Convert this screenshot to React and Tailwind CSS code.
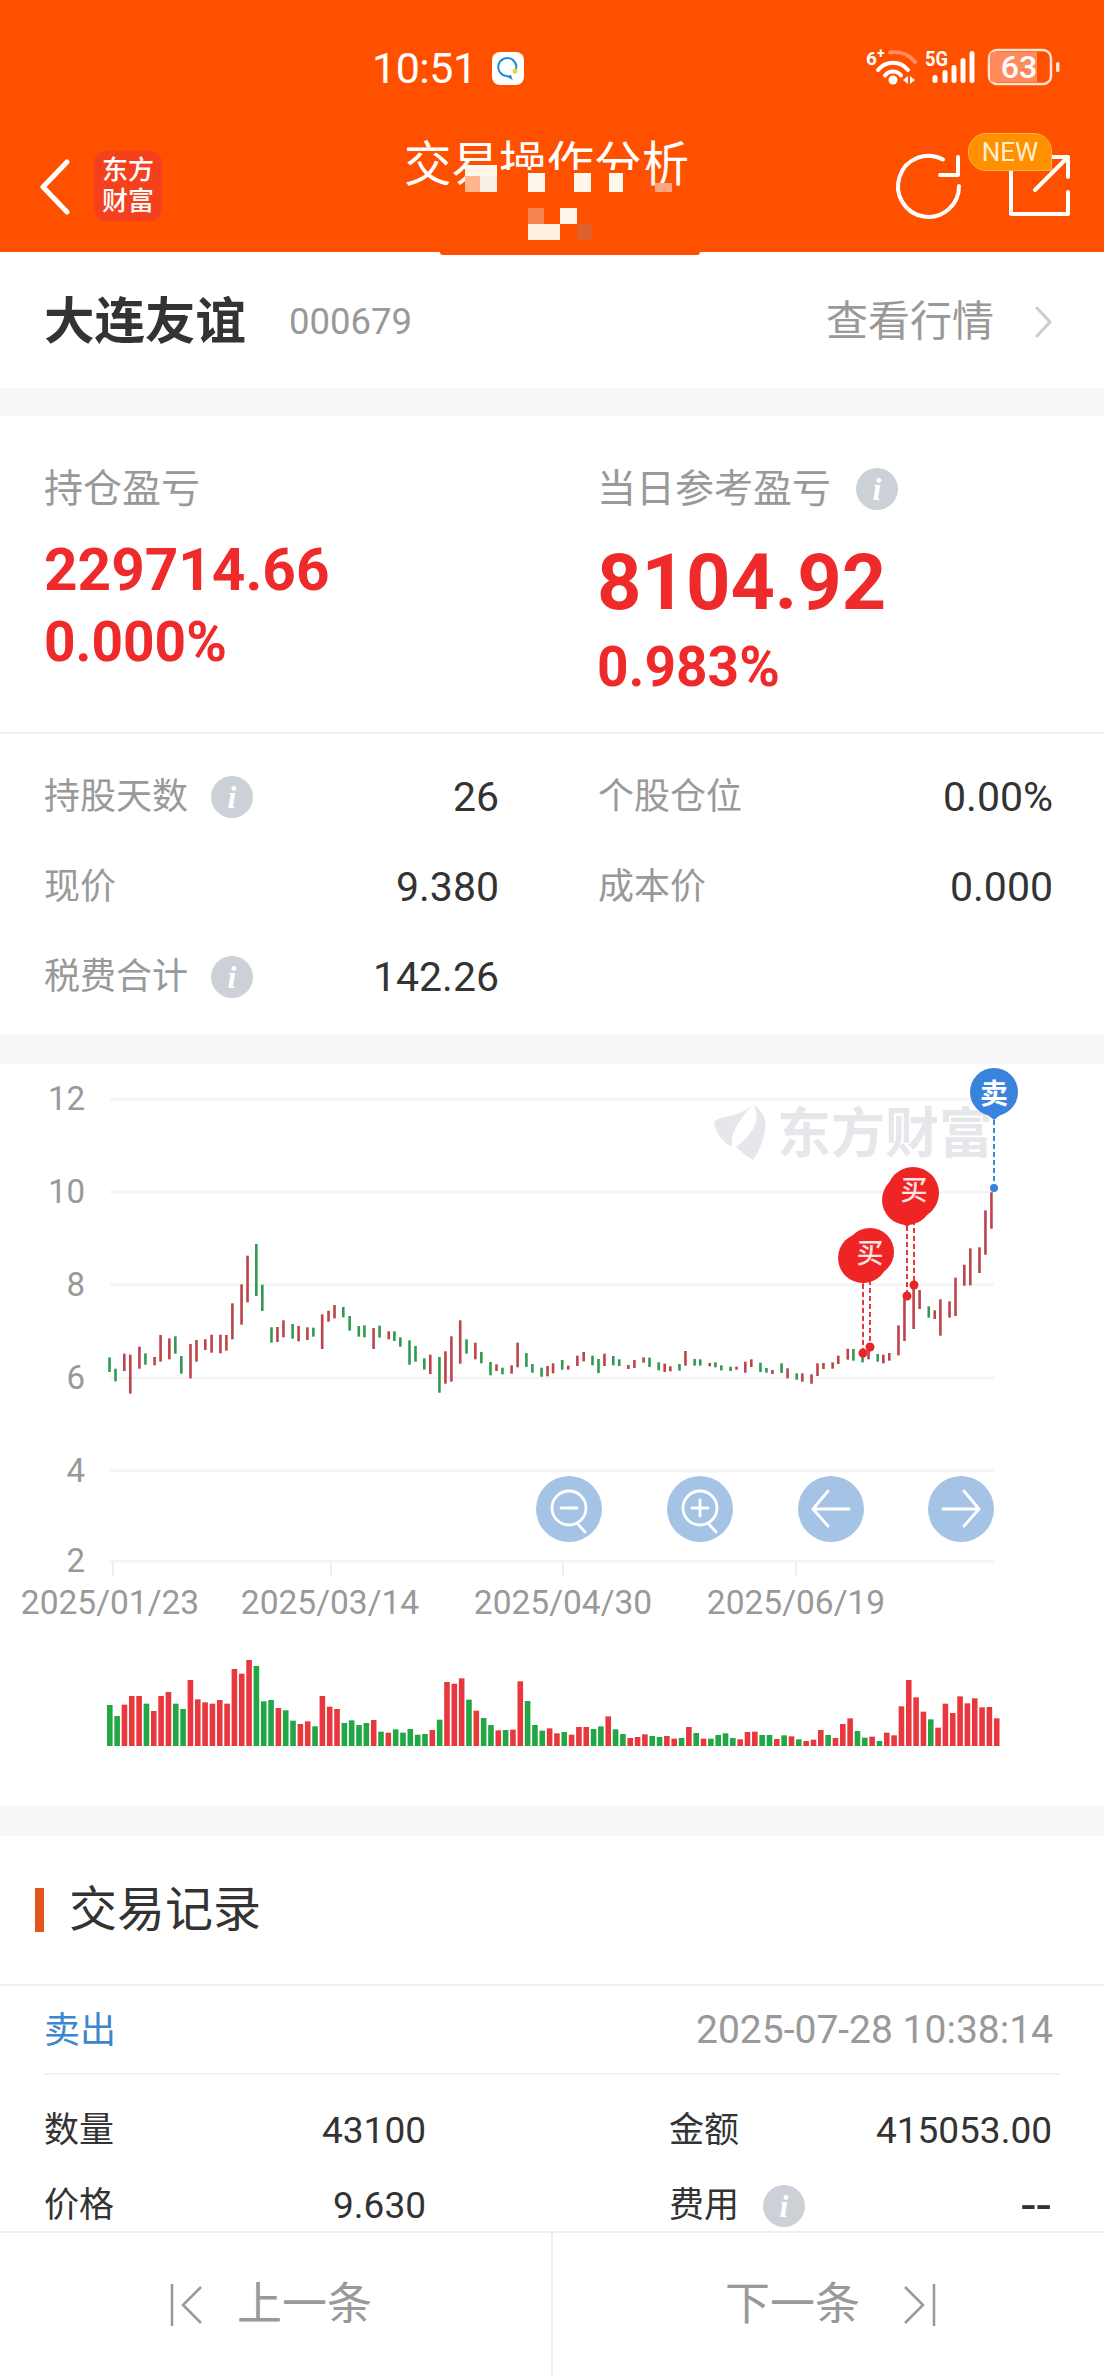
// candle data read off the chart: [x, top, bottom, up]
const leftCandles = [
  [311,922,966,0],[328,956,994,0],[353,911,963,1],[370,914,1031,1],[396,890,956,1],[413,910,944,0],[439,921,946,1],[456,855,935,1],
  [481,865,928,1],[498,859,911,0],[515,918,971,0],[541,882,985,1],[558,870,935,1],[583,868,900,1],[601,854,908,1],[626,854,910,1],
  [643,855,902,1],[660,760,868,1],[686,703,824,1],[703,617,757,1],[728,582,738,0],[745,704,783,0],[771,832,878,0],[788,831,876,1],
  [805,811,862,1],[831,822,866,0],[848,828,874,1],[873,832,870,1],[890,833,860,0],[915,793,897,1],[933,782,815,1],[950,765,805,1],
  [975,771,802,0],[993,798,842,0],[1019,828,860,0],[1035,826,862,0],[1061,834,897,1],[1078,827,863,0],[1104,844,868,1],[1120,844,873,0],
  [1137,862,890,0],[1163,871,944,0],[1180,888,935,0],[1205,925,959,0],[1222,914,972,1],[1248,921,1028,0],[1265,904,1001,1],[1282,859,995,1],
  [1307,811,941,1],[1325,868,911,0],[1350,878,928,1],[1367,906,940,0],[1393,936,976,0],[1410,943,963,1],[1427,953,973,0],[1453,946,971,1],
  [1470,878,952,1],[1495,909,951,0],[1512,942,968,0],[1538,953,980,0],[1555,948,979,1],
];
const rightCandles = [
  [3,940,970,1],[29,930,959,0],[46,947,959,1],[72,917,948,1],[90,906,934,1],[115,917,946,0],[132,927,969,0],[149,911,948,1],
  [174,918,946,0],[191,928,948,0],[217,945,957,1],[234,930,954,1],[260,922,938,1],[277,923,951,0],[303,937,961,0],[320,941,966,1],
  [336,949,964,1],[362,942,962,0],[379,903,947,1],[405,927,947,0],[421,928,947,0],[448,939,949,1],[464,937,952,0],[481,946,961,0],
  [507,950,963,0],[524,950,959,1],[549,935,968,1],[566,928,951,1],[592,938,966,0],[609,954,968,0],[626,960,972,1],[652,940,969,0],
  [669,955,985,1],[695,970,989,0],[711,970,995,1],[737,973,1001,1],[754,940,978,1],[771,939,957,1],[797,937,956,1],[813,917,942,1],
  [840,896,929,1],[856,897,932,0],[882,905,937,0],[899,896,928,1],[925,912,935,0],[941,914,940,1],[958,909,932,1],[984,826,916,1],
  [1001,745,873,1],[1027,705,837,1],[1044,720,777,1],[1070,769,803,0],[1087,781,807,1],[1103,748,857,1],[1129,754,803,1],[1146,683,798,1],
  [1171,644,707,1],[1188,595,706,1],[1214,592,669,1],[1231,481,614,1],[1248,427,536,1],
];
const candles = [
  ...leftCandles.map(([x, t, b, up]) => [x / 2.84, 1050 + t / 3, 1050 + b / 3, up]),
  ...rightCandles.map(([x, t, b, up]) => [552 + x / 2.84, 1050 + t / 3, 1050 + b / 3, up]),
];

const volumes = [
  [0,915],[0,948],[1,914],[1,888],[1,888],[0,911],[1,933],[1,888],[1,876],[0,911],[0,927],[1,840],[1,898],[1,907],[1,911],[1,900],[1,911],
  [1,807],[1,821],[1,780],[0,798],[0,904],[0,900],[1,924],[0,931],[0,962],[1,972],[1,964],[0,979],[1,888],[1,920],[1,927],[0,969],[0,961],
  [0,975],[0,969],[1,960],[0,995],[1,998],[0,988],[0,998],[0,987],[0,1004],[0,1002],[1,990],[0,959],[1,846],[1,851],[1,835],[0,899],[1,932],
  [0,954],[0,975],[1,991],[0,990],[1,989],[1,844],[0,903],[0,975],[0,992],[1,985],[1,1000],[0,996],[1,1004],[1,981],[1,981],[0,987],[0,979],
  [1,949],[0,988],[0,1002],[1,1014],[1,1011],[1,1003],[0,1008],[0,1011],[1,1008],[1,1016],[0,1014],[1,981],[0,999],[1,1016],[0,1016],[0,1005],
  [0,1000],[0,1014],[1,1018],[1,996],[1,995],[0,1005],[0,1005],[1,1017],[0,1006],[1,1009],[0,1018],[1,1023],[1,1019],[1,990],[0,1005],[1,1014],
  [1,972],[1,955],[0,993],[0,1013],[1,1010],[0,1023],[1,998],[1,1006],[1,919],[1,840],[1,892],[1,935],[0,958],[1,983],[1,911],[1,939],[1,889],
  [1,910],[1,895],[1,922],[1,921],[1,955],
];

const gridLines = [[1099, '12'], [1192, '10'], [1285, '8'], [1378, '6'], [1471, '4'], [1561, '2']];
const dates = [[113, 110, '2025/01/23'], [331, 330, '2025/03/14'], [563, 563, '2025/04/30'], [796, 796, '2025/06/19']];

function InfoDot() {
  return (
    <span className="w-[42px] h-[42px] rounded-full bg-[#ccd1d8] flex items-center justify-center shrink-0 text-white italic font-bold text-[32px] leading-none font-['Liberation_Serif',serif]">
      i
    </span>
  );
}

function Stat({ label, value, info }) {
  return (
    <div className="flex items-center justify-between h-[90px]">
      <div className="flex items-center gap-[23px] text-[36px] leading-none text-[#999999]">
        {label}
        {info && <InfoDot />}
      </div>
      <span className="text-[41px] leading-none text-[#333333]">{value}</span>
    </div>
  );
}

function TradeCell({ label, value, info, valueClass = 'text-[37px]' }) {
  return (
    <div className="flex items-center justify-between h-[75px]">
      <div className="flex items-center gap-[24px] text-[35px] leading-none text-[#333333]">
        {label}
        {info && <InfoDot />}
      </div>
      <span className={`leading-none text-[#333333] ${valueClass}`}>{value}</span>
    </div>
  );
}

function StatusIcons() {
  return (
    <svg width="200" height="50" viewBox="865 45 200 50" className="absolute left-[865px] top-[45px]" fill="none">
      <text x="866" y="65" fill="#fff" fontSize="19" fontWeight="700">6</text>
      <text x="877" y="58" fill="#fff" fontSize="14" fontWeight="700">+</text>
      <path d="M890 52.5 A27 27 0 0 1 915 62" stroke="#ff8d60" strokeWidth="4" strokeLinecap="round" />
      <path d="M878 70 A19 19 0 0 1 908 70" stroke="#fff" strokeWidth="4" strokeLinecap="round" />
      <path d="M885 75.5 A10 10 0 0 1 901 75.5" stroke="#fff" strokeWidth="4" strokeLinecap="round" />
      <circle cx="893" cy="80" r="4.5" fill="#fff" />
      <path d="M903 80 l5 -4 v8 z M910 76 l5 4 l-5 4 z" fill="#fff" />
      <text x="925" y="66" fill="#fff" fontSize="21" fontWeight="700" textLength="23" lengthAdjust="spacingAndGlyphs">5G</text>
      {[[935, 75], [945, 70], [954, 65], [963, 58], [972, 51]].map(([x, y]) => (
        <rect key={x} x={x - 2.5} y={y} width="5" height={83 - y} rx="2.5" fill="#fff" />
      ))}
      <rect x="989" y="50" width="62" height="34" rx="8" stroke="#ffe2d2" strokeWidth="2.5" />
      <path d="M993 52 h44 v30 h-44 a3 3 0 0 1 -3 -3 v-24 a3 3 0 0 1 3 -3 z" fill="#ff8a5c" />
      <text x="1019" y="78" textAnchor="middle" fill="#fff" fontSize="32" fontWeight="500">63</text>
      <rect x="1056" y="62" width="3.5" height="10" rx="1.5" fill="#ffe2d2" />
    </svg>
  );
}

function Header() {
  return (
    <header className="relative h-[252px] bg-[#ff5000] shrink-0 text-white">
      {/* status bar */}
      <div className="absolute left-[372px] top-[46px] flex items-center gap-[15px]">
        <span className="text-[43px] leading-[44px] tracking-[-0.5px]">10:51</span>
        <div className="w-[32px] h-[33px] rounded-[8px] bg-white flex items-center justify-center">
          <svg width="24" height="24" viewBox="0 0 24 24" fill="none">
            <path d="M18 17 A9 9 0 1 0 11 20 L15 22 L14 19" stroke="#1d8fd8" strokeWidth="2" />
            <circle cx="19" cy="15" r="2.5" fill="#f2cf3c" />
          </svg>
        </div>
      </div>
      <StatusIcons />

      {/* nav */}
      <svg width="34" height="56" viewBox="0 0 34 56" className="absolute left-[38px] top-[159px]" fill="none">
        <path d="M29 3 L5 28 L29 53" stroke="#fff" strokeWidth="5" strokeLinecap="round" strokeLinejoin="round" />
      </svg>
      <div className="absolute left-[94px] top-[151px] w-[68px] h-[70px] rounded-[12px] bg-[#f5401e] flex flex-col items-center justify-center text-[26px] leading-[31px] font-medium">
        <span>东方</span>
        <span>财富</span>
      </div>
      <div className="absolute left-[404px] top-[137px] text-[47.5px] leading-[56px] whitespace-nowrap">交易操作分析</div>

      {/* mosaic over the title */}
      <div className="absolute left-[465px] top-[170px] w-[185px] h-[82px] bg-[#ff5000]" />
      <div className="absolute left-[440px] top-[252px] w-[260px] h-[3px] bg-[#ff5000] rounded-b-[3px]" />
      <div className="absolute left-[465px] top-[165px] w-[32px] h-[18px] bg-[#fff6ec]" />
      <div className="absolute left-[465px] top-[176px] w-[15px] h-[16px] bg-[#ffb58e]" />
      <div className="absolute left-[480px] top-[176px] w-[17px] h-[16px] bg-[#f7f0e4]" />
      <div className="absolute left-[528px] top-[173px] w-[17px] h-[19px] bg-[#fff6ec]" />
      <div className="absolute left-[574px] top-[173px] w-[17px] h-[19px] bg-[#fff6ec]" />
      <div className="absolute left-[609px] top-[173px] w-[14px] h-[19px] bg-[#fff6ec]" />
      <div className="absolute left-[655px] top-[183px] w-[17px] h-[9px] bg-[#ffa581]" />
      <div className="absolute left-[528px] top-[208px] w-[16px] h-[16px] bg-[#f5854f]" />
      <div className="absolute left-[560px] top-[208px] w-[17px] h-[16px] bg-[#fff6ec]" />
      <div className="absolute left-[528px] top-[224px] w-[32px] h-[16px] bg-[#fff0dd]" />
      <div className="absolute left-[577px] top-[224px] w-[15px] h-[16px] bg-[#e0622a]" />

      {/* refresh + share */}
      <svg viewBox="890 140 180 90" className="absolute left-[890px] top-[140px] w-[180px] h-[90px]" fill="none">
        <path d="M943 159.5 A30.5 30.5 0 1 0 959 186" stroke="#fff" strokeWidth="4" strokeLinecap="round" />
        <path d="M940 175 H958 V157" stroke="#fff" strokeWidth="4" strokeLinecap="round" strokeLinejoin="round" />
        <path d="M1011 165 V214 H1068 V192" stroke="#fff" strokeWidth="4" strokeLinecap="round" strokeLinejoin="round" />
        <path d="M1035 190 L1067 158 M1052 157 H1068 V177" stroke="#fff" strokeWidth="4" strokeLinecap="round" strokeLinejoin="round" />
      </svg>
      <div className="absolute left-[968px] top-[133px] w-[84px] h-[38px] rounded-t-[18px] rounded-bl-[18px] bg-[#ff9000] border border-[#ffae4d] flex items-center justify-center text-[26px] leading-none text-[#ffeecb]">
        NEW
      </div>
    </header>
  );
}

function Chart() {
  return (
    <svg width="1104" height="742" viewBox="0 1064 1104 742" className="block bg-white">
      {gridLines.map(([y, label]) => (
        <g key={label}>
          <line x1="110" x2="994" y1={y} y2={y} stroke="#f4f4f4" strokeWidth="2.5" />
          <text x="85" y={y + 11} textAnchor="end" fontSize="33" fill="#999999">{label}</text>
        </g>
      ))}
      {dates.map(([tick, center, label]) => (
        <g key={label}>
          <line x1={tick} x2={tick} y1="1561" y2="1576" stroke="#eeeeee" strokeWidth="2" />
          <text x={center} y="1614" textAnchor="middle" fontSize="33.5" fill="#999999">{label}</text>
        </g>
      ))}

      {/* watermark */}
      <path d="M714 1122 Q716 1118 730 1116 Q745 1112 753 1105 Q738 1120 733 1134 Q731 1142 732 1147 Q716 1138 714 1122 Z" fill="#e6e7ea" />
      <path d="M753 1104 Q768 1115 765 1130 Q762 1148 753 1160 Q744 1155 736 1147 Q752 1135 756 1122 Q758 1112 753 1104 Z" fill="#e6e7ea" />
      <text x="777" y="1153" fontSize="54" fontWeight="700" fill="#e6e7ea">东方财富</text>

      {candles.map(([x, t, b, up], i) => (
        <rect key={i} x={x - 1.3} y={t} width="2.6" height={b - t} fill={up ? '#bb444a' : '#2f9a50'} />
      ))}

      {/* trade markers */}
      <path d="M863 1284 V1353 M870 1280 V1347 M907 1226 V1296 M914 1220 V1285" stroke="#e0383c" strokeWidth="2" strokeDasharray="5 3" />
      {[[863, 1353], [870, 1347], [907, 1296], [914, 1285]].map(([x, y]) => (
        <circle key={x} cx={x} cy={y} r="4.5" fill="#e8262a" />
      ))}
      <g fill="#ef2424">
        <circle cx="870" cy="1252" r="24" />
        <circle cx="863" cy="1258" r="25" />
        <path d="M840 1266 L863 1284 L886 1266 Z" />
        <circle cx="913" cy="1193" r="26" />
        <circle cx="907" cy="1200" r="25" />
        <path d="M884 1208 L907 1227 L930 1208 Z" />
      </g>
      <text x="870" y="1263" textAnchor="middle" fontSize="27" fontWeight="500" fill="#fbe3e3">买</text>
      <text x="914" y="1200" textAnchor="middle" fontSize="27" fontWeight="500" fill="#fbe3e3">买</text>
      <path d="M994 1120 V1185" stroke="#3a83dc" strokeWidth="2" strokeDasharray="5 3" />
      <circle cx="994" cy="1188" r="4" fill="#3a83dc" />
      <circle cx="994" cy="1092" r="24" fill="#3a83dc" />
      <path d="M972 1102 L994 1120 L1016 1102 Z" fill="#3a83dc" />
      <text x="994" y="1104" textAnchor="middle" fontSize="28" fontWeight="700" fill="#ffffff">卖</text>

      {/* zoom + pan buttons */}
      {[569, 700, 831, 961].map((x) => (
        <circle key={x} cx={x} cy="1509" r="33" fill="#a5c3e5" />
      ))}
      <g stroke="#ffffff" strokeWidth="2.8" fill="none" strokeLinecap="round" strokeLinejoin="round">
        <circle cx="569" cy="1508" r="17" />
        <path d="M577 1523 L585 1532 M561 1508 H577" />
        <circle cx="700" cy="1508" r="17" />
        <path d="M708 1523 L716 1532 M692 1508 H708 M700 1500 V1516" />
        <path d="M828 1491 L813 1509 L828 1526 M813 1509 H849" />
        <path d="M964 1491 L979 1509 L964 1526 M943 1509 H979" />
      </g>

      {volumes.map(([up, top], i) => {
        const y = 1400 + top / 3;
        return <rect key={i} x={107 + i * 7.33} y={y} width="5.6" height={1746 - y} fill={up ? '#e8383d' : '#22a745'} />;
      })}
    </svg>
  );
}

export default function App() {
  return (
    <div className="w-[1104px] h-[2376px] flex flex-col overflow-hidden bg-[#f7f7f7] font-['Roboto','Noto_Sans_CJK_SC',sans-serif]">
      <Header />

      <main className="flex-1 min-h-0 overflow-hidden">
        <section className="h-[136px] bg-white flex items-center justify-between pl-[44px] pr-[52px] pt-[4px]">
          <div className="flex items-center gap-[43px]">
            <span className="text-[50.5px] leading-none font-bold text-[#333333]">大连友谊</span>
            <span className="text-[36.5px] leading-none text-[#999999]">000679</span>
          </div>
          <div className="flex items-center gap-[41px] text-[42px] leading-none text-[#999999]">
            查看行情
            <svg width="17" height="32" viewBox="0 0 17 32" fill="none">
              <path d="M2 2 L15 16 L2 30" stroke="#cccccc" strokeWidth="3" strokeLinecap="round" strokeLinejoin="round" />
            </svg>
          </div>
        </section>

        <section className="mt-[28px] bg-white h-[619px]">
          <div className="h-[318px] border-b-2 border-[#f0f0f0] grid grid-cols-[553px_1fr] pl-[44px] pt-[52px]">
            <div className="flex flex-col items-start">
              <span className="text-[39px] leading-[42px] text-[#999999]">持仓盈亏</span>
              <span className="mt-[31px] text-[58.5px] leading-[58px] font-bold text-[#ee2a2a]">229714.66</span>
              <span className="mt-[18px] text-[55px] leading-[50px] font-bold text-[#ee2a2a]">0.000%</span>
            </div>
            <div className="flex flex-col items-start">
              <div className="flex items-center gap-[25px] text-[39px] leading-[42px] text-[#999999]">
                当日参考盈亏
                <InfoDot />
              </div>
              <span className="mt-[34px] text-[77.5px] leading-[78px] font-bold text-[#ee2a2a]">8104.92</span>
              <span className="mt-[20px] text-[55px] leading-[50px] font-bold text-[#ee2a2a]">0.983%</span>
            </div>
          </div>
          <div className="grid grid-cols-[455px_455px] gap-x-[99px] pl-[44px] pt-[18px]">
            <Stat label="持股天数" value="26" info />
            <Stat label="个股仓位" value="0.00%" />
            <Stat label="现价" value="9.380" />
            <Stat label="成本价" value="0.000" />
            <Stat label="税费合计" value="142.26" info />
          </div>
        </section>

        <section className="mt-[29px]">
          <Chart />
        </section>

        <section className="mt-[30px] bg-white">
          <div className="h-[150px] border-b-2 border-[#f2f2f2] flex items-center pl-[35px] gap-[25px]">
            <span className="w-[9px] h-[44px] bg-[#e0561a]" />
            <span className="text-[48px] leading-none text-[#333333]">交易记录</span>
          </div>
          <div className="mx-[44px] h-[89px] border-b-2 border-[#f2f2f2] flex items-center justify-between pr-[7px] pt-[2px]">
            <span className="text-[36px] leading-none text-[#3d85cc]">卖出</span>
            <span className="text-[39px] leading-none text-[#999999]">2025-07-28 10:38:14</span>
          </div>
          <div className="grid grid-cols-[382px_383px] gap-x-[243px] pl-[44px] pt-[18px]">
            <TradeCell label="数量" value="43100" />
            <TradeCell label="金额" value="415053.00" />
            <TradeCell label="价格" value="9.630" />
            <TradeCell label="费用" value="--" info valueClass="text-[52px] tracking-[1px]" />
          </div>
        </section>
      </main>

      <footer className="h-[145px] shrink-0 bg-white border-t-2 border-[#eeeeee] grid grid-cols-[553px_1fr] text-[45px] leading-none text-[#999999]">
        <div className="border-r-2 border-[#eeeeee] flex items-center justify-start pl-[170px] gap-[35px]">
          <svg width="32" height="42" viewBox="0 0 32 42" fill="none" stroke="#999999" strokeWidth="2.5">
            <path d="M2 0 V42 M31 3 L13 21 L31 39" />
          </svg>
          上一条
        </div>
        <div className="flex items-center justify-start pl-[172px] gap-[44px]">
          下一条
          <svg width="32" height="42" viewBox="0 0 32 42" fill="none" stroke="#999999" strokeWidth="2.5">
            <path d="M30 0 V42 M1 3 L19 21 L1 39" />
          </svg>
        </div>
      </footer>
    </div>
  );
}
